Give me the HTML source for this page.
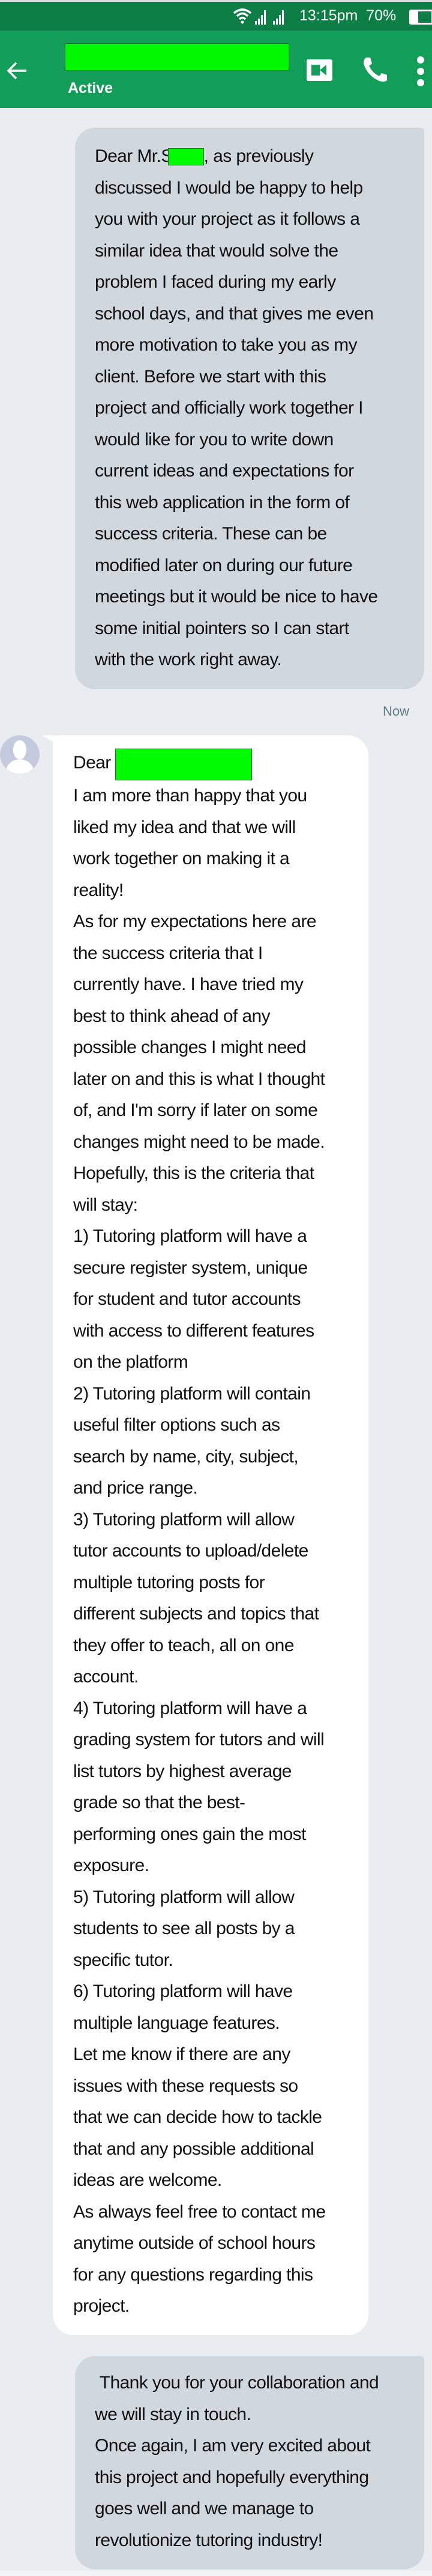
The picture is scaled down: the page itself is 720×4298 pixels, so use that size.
<!DOCTYPE html>
<html><head><meta charset="utf-8"><style>
*{margin:0;padding:0;box-sizing:border-box}
body{width:720px;height:4298px;background:#e9edf0;font-family:"Liberation Sans",Arial,sans-serif;position:relative;overflow:hidden;color:#111}
.status{position:absolute;left:0;top:0;width:720px;height:51px;background:#0d7e45;border-top:3px solid #d8dcdc}
.header{position:absolute;left:0;top:51px;width:720px;height:129px;background:#129d59}
.bub{position:absolute;font-size:30px;letter-spacing:-0.6px;line-height:52.5px;white-space:nowrap}
.b1{left:125px;top:213px;width:582px;height:937px;background:#d0d8de;border-radius:34px 6px 34px 34px;padding:22px 0 0 33px}
.b2{left:88px;top:1227px;width:526px;height:2669px;background:#fff;border-radius:4px 34px 34px 34px;padding:20px 0 0 34px}
.b3{left:125px;top:3931px;width:582px;height:356px;background:#d0d8de;border-radius:34px 6px 34px 34px;padding:19px 0 0 33px}
.g{display:inline-block;background:#00fa00;border:1px solid #2a6a2a;vertical-align:top}
</style></head><body>
<div class="status">
<svg style="position:absolute;left:388px;top:10px" width="32" height="28" viewBox="0 0 32 28"><path d="M2 9 Q16 -3 30 9" stroke="#fff" stroke-width="3.5" fill="none"/><path d="M7 14 Q16 5 25 14" stroke="#fff" stroke-width="3.5" fill="none"/><path d="M11 19 Q16 14 21 19" stroke="#fff" stroke-width="3.5" fill="none"/><circle cx="16" cy="24" r="2.5" fill="#fff"/></svg>
<svg style="position:absolute;left:425px;top:12px" width="62" height="26" viewBox="0 0 62 26"><g fill="#fff"><rect x="0" y="20" width="3" height="6"/><rect x="5" y="16" width="3" height="10"/><rect x="10" y="10" width="3" height="16"/><rect x="15" y="2" width="3" height="24"/><rect x="30" y="20" width="3" height="6"/><rect x="35" y="16" width="3" height="10"/><rect x="40" y="10" width="3" height="16"/><rect x="45" y="2" width="3" height="24"/></g></svg>
<div style="position:absolute;left:499px;top:9px;color:#fff;font-size:25px">13:15pm&nbsp;&nbsp;70%</div>
<div style="position:absolute;left:682px;top:13px;width:40px;height:25px;border:3px solid #fff;border-radius:3px"><div style="width:12px;height:100%;background:#fff"></div></div>
</div>
<div class="header">
<svg style="position:absolute;left:10px;top:51px" width="38" height="32" viewBox="0 0 38 32"><path d="M34 16 H5 M17 3 L4 16 L17 29" stroke="#fff" stroke-width="3.5" fill="none"/></svg>
<div class="g" style="position:absolute;left:108px;top:21px;width:374px;height:46px;background:#00f800;border:1px solid #106b30"></div>
<div style="position:absolute;left:113px;top:82px;color:#fff;font-weight:bold;font-size:25px">Active</div>
<svg style="position:absolute;left:510px;top:47px" width="46" height="38" viewBox="0 0 46 38"><rect x="1" y="1" width="43" height="36" rx="3" fill="#fff"/><rect x="9" y="10" width="14" height="18" fill="#129d59"/><path d="M23 19 L34 10 V28 Z" fill="#129d59"/></svg>
<svg style="position:absolute;left:604px;top:43px" width="42" height="44" viewBox="0 0 42 44"><path d="M6 2 L13 2 L16 12 L11 16 Q17 28 28 33 L32 28 L41 31 L41 40 Q36 44 28 41 Q8 32 2 12 Q2 5 6 2 Z" fill="#fff"/></svg>
<div style="position:absolute;left:695px;top:43px;width:12px;height:12px;border-radius:50%;background:#fff"></div>
<div style="position:absolute;left:695px;top:62px;width:12px;height:12px;border-radius:50%;background:#fff"></div>
<div style="position:absolute;left:695px;top:81px;width:12px;height:12px;border-radius:50%;background:#fff"></div>
</div>

<div class="bub b1">Dear Mr.S<span class="g" style="width:60px;height:29px;margin:12px 0 0 -8px;position:relative"></span>, as previously<br>discussed I would be happy to help<br>you with your project as it follows a<br>similar idea that would solve the<br>problem I faced during my early<br>school days, and that gives me even<br>more motivation to take you as my<br>client. Before we start with this<br>project and officially work together I<br>would like for you to write down<br>current ideas and expectations for<br>this web application in the form of<br>success criteria. These can be<br>modified later on during our future<br>meetings but it would be nice to have<br>some initial pointers so I can start<br>with the work right away.</div>

<div style="position:absolute;left:638px;top:1174px;font-size:22px;color:#5f7a87">Now</div>

<div style="position:absolute;left:0;top:1227px;width:66px;height:64px;border-radius:50%;background:#c4cbde;overflow:hidden"><div style="position:absolute;left:22px;top:8px;width:22px;height:32px;border-radius:50%;background:#fff"></div><div style="position:absolute;left:10px;top:40px;width:46px;height:40px;border-radius:50% 50% 0 0;background:#fff"></div></div>
<div style="position:absolute;left:70px;top:1227px;width:0;height:0;border-top:12px solid #fff;border-left:20px solid transparent"></div>

<div class="bub b2">Dear <span class="g" style="width:228px;height:53px;margin-top:2px"></span><br>I am more than happy that you<br>liked my idea and that we will<br>work together on making it a<br>reality!<br>As for my expectations here are<br>the success criteria that I<br>currently have. I have tried my<br>best to think ahead of any<br>possible changes I might need<br>later on and this is what I thought<br>of, and I'm sorry if later on some<br>changes might need to be made.<br>Hopefully, this is the criteria that<br>will stay:<br>1) Tutoring platform will have a<br>secure register system, unique<br>for student and tutor accounts<br>with access to different features<br>on the platform<br>2) Tutoring platform will contain<br>useful filter options such as<br>search by name, city, subject,<br>and price range.<br>3) Tutoring platform will allow<br>tutor accounts to upload/delete<br>multiple tutoring posts for<br>different subjects and topics that<br>they offer to teach, all on one<br>account.<br>4) Tutoring platform will have a<br>grading system for tutors and will<br>list tutors by highest average<br>grade so that the best-<br>performing ones gain the most<br>exposure.<br>5) Tutoring platform will allow<br>students to see all posts by a<br>specific tutor.<br>6) Tutoring platform will have<br>multiple language features.<br>Let me know if there are any<br>issues with these requests so<br>that we can decide how to tackle<br>that and any possible additional<br>ideas are welcome.<br>As always feel free to contact me<br>anytime outside of school hours<br>for any questions regarding this<br>project.</div>

<div class="bub b3">&nbsp;Thank you for your collaboration and<br>we will stay in touch.<br>Once again, I am very excited about<br>this project and hopefully everything<br>goes well and we manage to<br>revolutionize tutoring industry!</div>
<div style="position:absolute;left:0;top:4289px;width:720px;height:9px;background:#f2f4f5"></div>
</body></html>
